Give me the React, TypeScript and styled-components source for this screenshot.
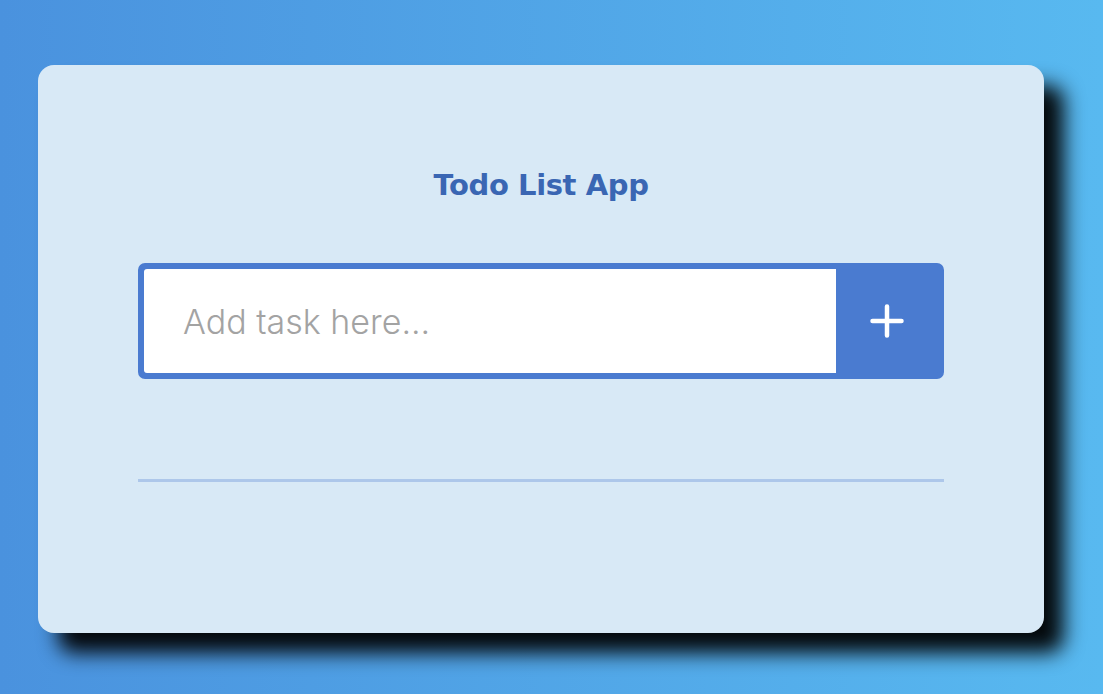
import React from "react";
import styled, { createGlobalStyle } from "styled-components";

const Global = createGlobalStyle`
  html, body { margin: 0; padding: 0; }
  body {
    width: 1103px;
    height: 694px;
    overflow: hidden;
    background: linear-gradient(90deg, #4a92de 0%, #58b9f0 100%);
    font-family: "DejaVu Sans", sans-serif;
  }
`;

const Page = styled.div`
  box-sizing: border-box;
  width: 1103px;
  height: 694px;
  padding: 65px 59px 61px 38px;
`;

const Card = styled.div`
  box-sizing: border-box;
  width: 1006px;
  height: 568px;
  background: #d8e9f6;
  border-radius: 16px;
  box-shadow: 20px 20px 20px rgba(0, 0, 0, 0.95);
  padding: 100px 100px 0 100px;
  display: flex;
  flex-direction: column;
`;

const Title = styled.h1`
  margin: 0;
  text-align: center;
  font-family: "DejaVu Sans", Verdana, sans-serif;
  font-weight: 700;
  font-size: 29px;
  color: #3a66b3;
  line-height: 40px;
  letter-spacing: -0.4px;
`;

const InputRow = styled.div`
  margin-top: 58px;
  display: flex;
  height: 116px;
  box-sizing: border-box;
  border: 6px solid #4a7bd0;
  border-radius: 7px;
  background: #4a7bd0;
  overflow: hidden;
`;

const TaskInput = styled.input`
  flex: 1;
  border: none;
  outline: none;
  background: #fff;
  border-radius: 3px 0 0 3px;
  padding: 0 0 0 39px;
  font-family: Inter, "Open Sans", sans-serif;
  font-weight: 300;
  font-size: 34px;
  color: #333;
  &::placeholder {
    color: #a3a3a3;
  }
`;

const AddButton = styled.button`
  width: 102px;
  border: none;
  background: #4a7bd0;
  display: flex;
  align-items: center;
  justify-content: center;
  padding: 0;
  cursor: pointer;
`;

const Divider = styled.div`
  margin-top: 100px;
  height: 3px;
  background: #adc7ea;
`;

export default function App() {
  return (
    <>
      <Global />
      <Page>
        <Card>
          <Title>Todo List App</Title>
          <InputRow>
            <TaskInput placeholder="Add task here..." />
            <AddButton aria-label="Add task">
              <svg width="36" height="36" viewBox="0 0 36 36">
                <path d="M18 3.5 V32.5 M3.5 18 H32.5" stroke="#fff" strokeWidth="4.5" strokeLinecap="round" fill="none" />
              </svg>
            </AddButton>
          </InputRow>
          <Divider />
        </Card>
      </Page>
    </>
  );
}
